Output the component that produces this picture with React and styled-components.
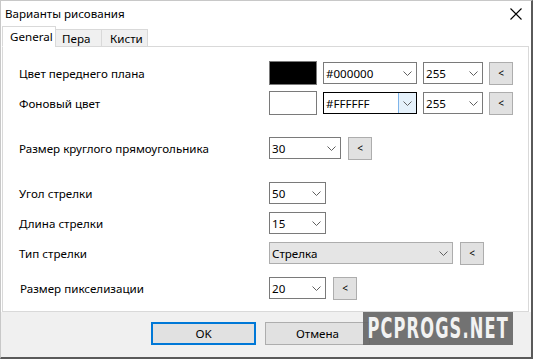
import React from "react";
import styled, { createGlobalStyle } from "styled-components";

const Global = createGlobalStyle`
  html, body {
    margin: 0;
    padding: 0;
    background: #ffffff;
  }
  body {
    font-family: "Noto Sans", "Liberation Sans", sans-serif;
    font-size: 11.6px;
    color: #000;
  }
`;

function Chevron() {
  return (
    <svg width="9" height="5" viewBox="0 0 9 5">
      <path d="M0.5 0.5 L4.5 4.5 L8.5 0.5" fill="none" stroke="#606060" strokeWidth="1" />
    </svg>
  );
}

function Combo({ value, width, focused, flat }) {
  return (
    <ComboBox $width={width} $focused={focused} $flat={flat}>
      <ComboText>{value}</ComboText>
      <ComboArrow $focused={focused}>
        <Chevron />
      </ComboArrow>
    </ComboBox>
  );
}

export default function App() {
  return (
    <>
      <Global />
      <Window>
        <TitleBar>
          <Title>Варианты рисования</Title>
          <Close>
            <svg width="12" height="12" viewBox="0 0 12 12">
              <path d="M0.5 0.5 L11.5 11.5 M11.5 0.5 L0.5 11.5" stroke="#000" strokeWidth="1.1" />
            </svg>
          </Close>
        </TitleBar>

        <Tabs>
          <Tab $active $width={54} $pad={7}>General</Tab>
          <Tab $width={47} $pad={6}>Пера</Tab>
          <Tab $width={47} $pad={8}>Кисти</Tab>
        </Tabs>

        <Panel>
          <Row $top={14}>
            <Label>Цвет переднего плана</Label>
            <Swatch $color="#000000" />
            <Combo value="#000000" width={94} />
            <Combo value="255" width={60} />
            <SmallButton>&lt;</SmallButton>
          </Row>
          <Row $top={6}>
            <Label>Фоновый цвет</Label>
            <Swatch $color="#ffffff" />
            <Combo value="#FFFFFF" width={94} focused />
            <Combo value="255" width={60} />
            <SmallButton>&lt;</SmallButton>
          </Row>
          <Row $top={21}>
            <Label>Размер круглого прямоугольника</Label>
            <Combo value="30" width={72} />
            <SmallButton $gap={1}>&lt;</SmallButton>
          </Row>
          <Row $top={21}>
            <Label>Угол стрелки</Label>
            <Combo value="50" width={57} />
          </Row>
          <Row $top={6}>
            <Label>Длина стрелки</Label>
            <Combo value="15" width={57} />
          </Row>
          <Row $top={6}>
            <Label>Тип стрелки</Label>
            <Combo value="Стрелка" width={184} flat />
            <SmallButton $gap={1}>&lt;</SmallButton>
          </Row>
          <Row $top={11}>
            <Label $indent={1}>Размер пикселизации</Label>
            <Combo value="20" width={57} />
            <SmallButton $gap={1}>&lt;</SmallButton>
          </Row>
        </Panel>

        <Footer>
          <DialogButton $default>OK</DialogButton>
          <DialogButton>Отмена</DialogButton>
        </Footer>

        <Watermark>
          <WatermarkText>PCPROGS.NET</WatermarkText>
        </Watermark>
      </Window>
    </>
  );
}

const Window = styled.div`
  position: relative;
  width: 533px;
  height: 359px;
  box-sizing: border-box;
  border-top: 1px solid #c8c8c8;
  border-left: 1px solid #c8c8c8;
  border-right: 2px solid #5a5a5a;
  border-bottom: 2px solid #5a5a5a;
  background: #ffffff;
  display: flex;
  flex-direction: column;
  overflow: hidden;
`;

const TitleBar = styled.div`
  height: 26px;
  display: flex;
  align-items: center;
  justify-content: space-between;
  padding: 0 9px 0 4px;
  background: #ffffff;
`;

const Title = styled.div`
  font-size: 11.6px;
  color: #000;
  padding-bottom: 1px;
`;

const Close = styled.div`
  display: flex;
  align-items: center;
  margin-top: -1px;
`;

const Tabs = styled.div`
  display: flex;
  align-items: flex-end;
  height: 20px;
  padding-left: 1px;
  position: relative;
  z-index: 1;
  margin-bottom: -1px;
`;

const Tab = styled.div`
  box-sizing: border-box;
  width: ${(p) => p.$width}px;
  height: ${(p) => (p.$active ? 21 : 18)}px;
  padding-left: ${(p) => p.$pad}px;
  border: 1px solid #d9d9d9;
  border-bottom: ${(p) => (p.$active ? "1px solid #ffffff" : "1px solid #d9d9d9")};
  margin-left: ${(p) => (p.$active ? 0 : -1)}px;
  background: ${(p) => (p.$active ? "#ffffff" : "#f0f0f0")};
  display: flex;
  align-items: center;
  font-size: 11.6px;
  line-height: 1;
  white-space: nowrap;
  padding-top: ${(p) => (p.$active ? 0 : 1)}px;
`;

const Panel = styled.div`
  margin: 0 2px 0 1px;
  height: 266px;
  box-sizing: border-box;
  border: 1px solid #d9d9d9;
  background: #ffffff;
  padding-left: 16px;
  display: flex;
  flex-direction: column;
`;

const Row = styled.div`
  display: flex;
  align-items: center;
  height: 24px;
  margin-top: ${(p) => p.$top}px;
  gap: 6px;
`;

const Label = styled.div`
  width: ${(p) => 244 - (p.$indent || 0)}px;
  padding-left: ${(p) => p.$indent || 0}px;
  flex-shrink: 0;
  font-size: 11.6px;
  white-space: nowrap;
`;

const Swatch = styled.div`
  width: 48px;
  height: 24px;
  box-sizing: border-box;
  border: 1px solid #7a7a7a;
  background: ${(p) => p.$color};
`;

const ComboBox = styled.div`
  box-sizing: border-box;
  width: ${(p) => p.$width}px;
  height: 22px;
  border: 1px solid ${(p) => (p.$focused ? "#000000" : p.$flat ? "#adadad" : "#7a7a7a")};
  background: ${(p) => (p.$flat ? "#e5e5e5" : "#ffffff")};
  display: flex;
  align-items: stretch;
`;

const ComboText = styled.div`
  flex: 1;
  display: flex;
  align-items: center;
  padding-left: 2px;
  font-size: 11.6px;
  white-space: nowrap;
  overflow: hidden;
`;

const ComboArrow = styled.div`
  width: 17px;
  display: flex;
  align-items: center;
  justify-content: center;
  background: ${(p) => (p.$focused ? "#e5f1fb" : "transparent")};
  border-left: 1px solid ${(p) => (p.$focused ? "#7eb4ea" : "transparent")};
`;

const SmallButton = styled.div`
  box-sizing: border-box;
  width: 24px;
  height: 23px;
  margin-left: ${(p) => p.$gap || 0}px;
  border: 1px solid #adadad;
  background: #e1e1e1;
  display: flex;
  align-items: center;
  justify-content: center;
  font-size: 10px;
  color: #000;
`;

const Footer = styled.div`
  flex: 1;
  background: #f0f0f0;
  display: flex;
  align-items: flex-start;
  padding: 10px 0 0 150px;
  gap: 9px;
`;

const DialogButton = styled.div`
  box-sizing: border-box;
  width: 105px;
  height: 23px;
  display: flex;
  align-items: center;
  justify-content: center;
  background: #e1e1e1;
  border: ${(p) => (p.$default ? "2px solid #0078d7" : "1px solid #adadad")};
  font-size: 11.6px;
`;

const Watermark = styled.div`
  position: absolute;
  left: 362px;
  top: 311px;
  width: 150px;
  height: 33px;
  background: rgba(100, 100, 100, 0.9);
  display: flex;
  align-items: center;
  justify-content: center;
`;

const WatermarkText = styled.span`
  flex-shrink: 0;
  display: inline-block;
  color: #f2f2f2;
  font-family: "DejaVu Sans", sans-serif;
  font-weight: bold;
  font-size: 29px;
  line-height: 1;
  letter-spacing: 2px;
  transform: scaleX(0.56);
  white-space: nowrap;
`;
